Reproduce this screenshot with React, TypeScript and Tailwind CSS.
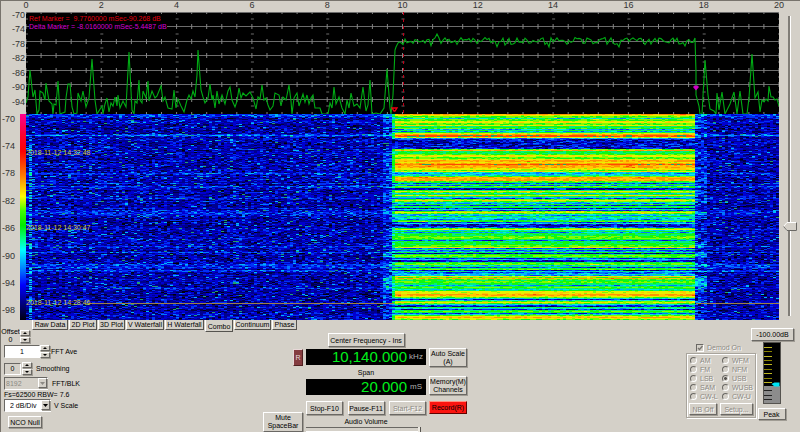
import React, { useMemo } from "react";

const RAISED =
  "border border-t-white border-l-white border-r-[#6a6864] border-b-[#6a6864] bg-[#d4d0c8] shadow-[1px_1px_0_#a09c94]";
const SUNKEN = "border border-t-[#6a6864] border-l-[#6a6864] border-r-white border-b-white";
const GREYED = "text-[#8c8983] [text-shadow:1px_1px_0_#fff]";

const X_TICKS = [0, 2, 4, 6, 8, 10, 12, 14, 16, 18, 20];
const SPECTRUM_LEVELS = [-70, -74, -78, -82, -86, -90, -94];
const WATERFALL_LEVELS = [-70, -74, -78, -82, -86, -90, -94, -98];

function createRandom(seed: number) {
  let s = seed;
  return () => {
    s = (s + 0x6d2b79f5) | 0;
    let t = Math.imul(s ^ (s >>> 15), 1 | s);
    t = (t + Math.imul(t ^ (t >>> 7), 61 | t)) ^ t;
    return ((t ^ (t >>> 14)) >>> 0) / 4294967296;
  };
}

/* ---------- spectrum ---------- */

const TRACE_BEFORE =
  "0,91 2,85 4,58 7,85 9,78 11,102 13,98 14,79 17,81 19,88 20,71 23,89 26,92 27,102 28,92 30,93 32,69 34,102 39,100 40,86 42,72 44,72 46,95 48,102 51,101 52,81 55,89 57,79 60,95 63,86 66,47 69,88 71,102 76,94 77,102 79,92 81,86 83,100 85,91 87,94 89,85 91,94 92,83 94,96 97,89 100,95 103,40 106,98 108,102 109,89 111,91 113,68 114,88 116,91 117,79 120,86 122,69 123,89 126,79 129,86 131,84 135,74 137,89 139,85 142,96 146,97 148,78 150,96 152,87 155,94 158,100 161,88 163,83 165,87 167,79 169,85 171,63 172,38 175,78 177,85 179,91 182,86 184,72 186,88 187,83 189,96 191,79 193,92 196,83 199,92 202,79 204,75 206,88 209,95 211,89 213,76 215,86 217,81 220,84 224,80 227,86 230,97 232,85 234,87 236,73 238,88 240,86 242,93 244,98 247,94 249,81 253,83 255,94 257,85 260,88 263,73 265,89 266,102 268,86 271,81 273,94 277,82 279,90 281,83 283,92 285,86 287,83 289,96 294,96 296,102 302,102 304,91 306,96 308,75 310,92 313,85 316,96 319,102 321,88 323,96 325,81 328,94 331,92 334,96 337,75 340,99 342,93 344,68 346,102 350,101 354,102 358,96 361,57 364,96 365,102 367,83 369,38 370,35 372,31";
const TRACE_AFTER =
  "669,26 670,60 670,83 673,94 674,102 676,102 679,48 682,83 684,97 688,99 690,102 691,81 693,98 696,80 699,102 704,92 708,80 711,102 714,79 717,102 721,102 723,86 726,42 729,86 732,80 734,100 736,88 738,90 740,87 742,89 743,74 745,85 747,85 749,88 751,87 753,94";

function buildTrace() {
  const rnd = createRandom(11);
  const pts: string[] = [];
  for (let x = 373; x < 669; x += 2) {
    let y = 29 + (rnd() - 0.5) * 7 + (rnd() > 0.95 ? 3 : 0);
    if (x < 390) y += 1;
    if (x === 409 || x === 413) y = 26;
    if (x === 411) y = 22;
    pts.push(`${x},${y.toFixed(1)}`);
  }
  return `${TRACE_BEFORE} ${pts.join(" ")} ${TRACE_AFTER}`;
}

function Spectrum() {
  const trace = useMemo(buildTrace, []);
  const rows = [14, 29, 43, 58, 72, 87];
  const minor = Array.from({ length: 51 }, (_, i) => i * 15.06);
  const major = Array.from({ length: 11 }, (_, i) => i * 75.3);
  const ticks = minor.map((x) => rows.map((y) => `M${x.toFixed(1)} ${y - 2}v5`).join("") + `M${x.toFixed(1)} 0v2M${x.toFixed(1)} 100v2`).join("");
  const dashes = major.map((x) => [7, 22, 36, 50, 65, 80, 94].map((y) => `M${(x - 1).toFixed(1)} ${y}h3`).join("")).join("");
  return (
    <svg className="block h-[102px] w-full bg-black" viewBox="0 0 753 102" preserveAspectRatio="none" role="img" aria-label="Spectrum">
      <path d={rows.map((y) => `M0 ${y}.5H753`).join("") + "M0 .5H753"} stroke="#6c6c6c" />
      <path d={ticks} stroke="#858585" />
      <path d={dashes} stroke="#6c6c6c" />
      <path d="M377.5 0V102" stroke="#c00018" strokeDasharray="3 4" />
      <polyline points={trace} fill="none" stroke="#00ac14" strokeWidth="1.1" />
      <path d="M366 96h5l-2 3h-1z" fill="none" stroke="#f00010" strokeWidth="1.3" />
      <path d="M667 75l1.500-1.500h3l1.500 1.500-3 3.500z" fill="#d000c8" />
    </svg>
  );
}

/* ---------- waterfall ---------- */

const PALETTE = [
  "#00000c", "#000048", "#000090", "#0000d0", "#0030f8", "#0078ff", "#00b8f8", "#00f0e0",
  "#00f080", "#10f810", "#80fc00", "#e8f000", "#ffc800", "#ff9400", "#ff4800", "#20a070",
];
const LEVEL: Record<string, number> = { n: 3, b: 4.3, a: 5.6, c: 6.9, g: 8.5, l: 9.6, y: 11.1, o: 12.6, r: 14 };

/* Signal strength of each sweep inside the burst, newest first, as run lengths. */
const BURST =
  "o1 y1 l2 c1 l2 y2 l2 y1 g2 l1 a1 g1 a1 g1 y1 o1 r1 r1 y1 a1 n10 l1 o1 g3 l1 y2 l2 y1 o2 y1 o1 r1 o3 y2 l1 y1 c1 a1 c2 l1 o4 l1 g1 b1 g1 a1 l1 g1 n2 g1 y1 l1 c1 g1 y1 g1 c1 b1 l1 y1 l1 c1 a1 g1 b1 g2 n1 c1 b1 l1 y1 l1 c1 a1 g1 c2 a1 g1 l1 b1 c1 n3 b1 l1 y1 c1 g1 a1 g3 l3 g1 b1 g4 l2 y1 b1 g1 b1 a1 g1 n1 g1 l2 g1 b1 c1 n2 g1 l2 c1 g1 b1 g1 l1 n1 c1 b1 a1 c1 a1 y1 l1 o1 l1 g1 l2 g2 a1 g1 l1 g1 c1 g1 y3 o2 y1 l1 c1 n1 c1 l1 y1 l1 c1 b1 n1 g1 c1 n1 g1 l1 g1 b1 c1 l1 y1 o1 y1 l1";

const BRIGHT: Record<number, number> = {
  0: 1.5, 1: 1.8, 2: 1.2, 3: 1, 7: 0.9, 8: 0.7, 20: 1.2, 21: 2.8, 22: 1, 39: 0.8, 59: 1.4, 60: 0.8, 69: 0.9, 72: 1.6,
  73: 0.6, 84: 0.8, 94: 1, 96: 1, 97: 0.8, 98: 1.1, 99: 1.2, 100: 0.9, 101: 0.8, 132: 1.5, 133: 0.6, 138: 1.5,
  150: 1.3, 151: 1.4, 152: 1.1, 153: 1.4, 154: 1.2, 156: 1.5, 157: 1, 173: 0.9, 174: 1.3,
};

const ROWS = 206;
const CELL = 3;
const COLS = 251;
const BURST_START = 368;
const BURST_END = 670;

function buildWaterfall() {
  const rnd = createRandom(2018);
  const sweeps: string[] = [];
  BURST.split(" ").forEach((run) => {
    for (let i = 0; i < Number(run.slice(1)); i++) sweeps.push(run[0]);
  });
  const paths = PALETTE.map(() => "");
  for (let y = 0; y < ROWS; y++) {
    const code = sweeps[y] ?? "l";
    const level = LEVEL[code];
    const strong = level > 6;
    const lift = BRIGHT[y] ?? 0;
    const drift = (rnd() - 0.5) * 0.7;
    const skirt = (y >= 162 && y < 174) || (y > 138 && y < 143);
    let runStart = 0;
    let runColor = -1;
    let held = 0;
    for (let c = 0; c <= COLS; c++) {
      const x = c * CELL;
      let color = -2;
      if (c < COLS) {
        if (x >= BURST_START - 2 && x < BURST_END - 1) {
          const spread = code === "n" ? 3.6 : code === "b" || code === "a" || code === "c" ? 2.8 : 1.5;
          held = held * 0.35 + (rnd() - 0.5) * spread;
          let v = level + held;
          if (x < BURST_START + 1 && strong) v = Math.min(v, 9.5) - rnd() * 2;
          color = Math.round(v);
        } else {
          let v = (rnd() + rnd()) * 2.45 + lift + drift;
          if (x === CELL && y > 22 && rnd() > 0.35) v += 3.2;
          const before = BURST_START - x;
          const after = x - BURST_END;
          const edge = skirt ? 1.5 + rnd() * 3.5 : strong ? rnd() * 2.6 : 0.3;
          if (before > 0 && before < 14) v += edge;
          if (after >= -1 && after < 9) v += edge;
          color = Math.round(Math.min(v, 9));
          if (rnd() > (x < BURST_START ? 0.972 : 0.982)) color = rnd() > 0.6 ? 15 : 6;
        }
        color = Math.max(0, Math.min(15, color));
      }
      if (color !== runColor) {
        if (runColor > 0) paths[runColor] += `M${runStart} ${y}H${x}v1H${runStart}z`;
        runStart = x;
        runColor = color;
      }
    }
  }
  return paths;
}

function Waterfall() {
  const paths = useMemo(buildWaterfall, []);
  return (
    <svg className="block h-[206px] w-full bg-[#00000c]" viewBox="0 0 753 206" preserveAspectRatio="none" shapeRendering="crispEdges" role="img" aria-label="Waterfall">
      {paths.map((d, i) => (d ? <path key={i} d={d} fill={PALETTE[i]} /> : null))}
      <path d="M62 189.500H368M670 189.500H753" stroke="#9c8048" />
    </svg>
  );
}

const STAMPS = [
  { time: "2018-11-12 14:32:48", place: "top-[35px]" },
  { time: "2018-11-12 14:30:47", place: "top-[110px]" },
  { time: "2018-11-12 14:28:46", place: "top-[185px]" },
];

/* ---------- controls ---------- */

function Button({ children, className = "", disabled = false }: { children: React.ReactNode; className?: string; disabled?: boolean }) {
  return (
    <button type="button" disabled={disabled} className={`flex items-center justify-center text-center whitespace-nowrap ${RAISED} ${disabled ? GREYED : ""} ${className}`}>
      {children}
    </button>
  );
}

function Spinner({ name }: { name: string }) {
  return (
    <span className="flex w-[10px] shrink-0 flex-col gap-px">
      <button type="button" aria-label={`${name} up`} className={`flex h-[6px] items-center justify-center ${RAISED}`}>
        <svg className="h-[2px] w-[4px]" viewBox="0 0 4 2"><path d="M0 2L2 0L4 2z" /></svg>
      </button>
      <button type="button" aria-label={`${name} down`} className={`flex h-[6px] items-center justify-center ${RAISED}`}>
        <svg className="h-[2px] w-[4px]" viewBox="0 0 4 2"><path d="M0 0L2 2L4 0z" /></svg>
      </button>
    </span>
  );
}

function Dropdown({ id, value, disabled = false, className = "" }: { id: string; value: string; disabled?: boolean; className?: string }) {
  return (
    <span className={`relative flex h-[13px] ${SUNKEN} ${className}`}>
      <select id={id} disabled={disabled} className={`w-full appearance-none leading-[11px] opacity-100 ${disabled ? "pl-px text-[#8c8983]" : "bg-white pl-[5px] text-black"}`}>
        <option>{value}</option>
      </select>
      <span className={`pointer-events-none absolute top-0 right-0 flex h-[10px] w-[9px] items-center justify-center ${RAISED}`}>
        <svg className="h-[3px] w-[5px]" viewBox="0 0 5 3"><path d="M0 0H5L2.500 3z" fill={disabled ? "#8c8983" : "#000"} /></svg>
      </span>
    </span>
  );
}

const TABS = [
  { name: "Raw Data", width: "w-[36px]" },
  { name: "2D Plot", width: "w-[28px]" },
  { name: "3D Plot", width: "w-[27px]" },
  { name: "V Waterfall", width: "w-[38px]" },
  { name: "H Waterfall", width: "w-[39px]" },
  { name: "Combo", width: "w-[28px]" },
  { name: "Continuum", width: "w-[37px]" },
  { name: "Phase", width: "w-[25px]" },
];

function Tabs() {
  return (
    <div role="tablist" className="ml-[31px] flex h-3 items-start gap-px">
      {TABS.map((tab) => {
        const active = tab.name === "Combo";
        return (
          <button
            key={tab.name}
            type="button"
            role="tab"
            aria-selected={active}
            className={`flex shrink-0 items-center justify-center border border-t-0 border-r-[#55534f] border-b-[#55534f] border-l-white whitespace-nowrap ${tab.width} ${active ? "h-3 pt-px" : "h-[10px]"}`}
          >
            {tab.name}
          </button>
        );
      })}
    </div>
  );
}

function FftPanel() {
  return (
    <section className="-mt-1 flex w-[262px] flex-col items-start pb-1 pl-[3px]">
      <div className="-ml-0.5 flex w-[28px] items-start justify-between">
        <span className="flex w-[17px] flex-col items-center leading-[8px]">
          <span>Offset</span>
          <span>0</span>
        </span>
        <span className="pt-0.5"><Spinner name="Offset" /></span>
      </div>
      <div className="mt-px flex items-center">
        <input id="ave" defaultValue="1" className={`h-[13px] w-[36px] bg-white text-center ${SUNKEN}`} />
        <Spinner name="FFT Ave" />
        <label htmlFor="ave" className="pl-px">FFT Ave</label>
      </div>
      <div className="mt-1 flex items-center">
        <input id="smooth" defaultValue="0" className={`h-[12px] w-[17px] text-center ${SUNKEN}`} />
        <span className="ml-px"><Spinner name="Smoothing" /></span>
        <label htmlFor="smooth" className="pl-1">Smoothing</label>
      </div>
      <div className="mt-0.5 flex items-center gap-1">
        <Dropdown id="blk" value="8192" disabled className="w-[44px]" />
        <label htmlFor="blk">FFT/BLK</label>
      </div>
      <p className="leading-[9px]">Fs=62500 RBW= 7.6</p>
      <div className="flex items-center gap-[3px]">
        <Dropdown id="vscale" value="2 dB/Div" className="w-[47px]" />
        <label htmlFor="vscale">V Scale</label>
      </div>
      <Button className="mt-1 ml-1 h-[12px] w-[34px]">NCO Null</Button>
    </section>
  );
}

function Readout({ value, unit }: { value: string; unit: string }) {
  return (
    <output className="flex h-4 items-center justify-end gap-px bg-black pr-0.5">
      <span className="text-[15px] leading-4 text-[#00f01c]">{value}</span>
      <span className="w-4 text-center text-[8px] text-[#b0b0b0]">{unit}</span>
    </output>
  );
}

function TuningPanel() {
  return (
    <section className="flex gap-[3px] pt-px">
      <div className="flex w-[40px] flex-col items-end justify-between pt-4">
        <button type="button" className="h-[17px] w-[10px] border border-t-[#e8d8d8] border-l-[#e8d8d8] border-r-[#502020] border-b-[#502020] bg-[#843c40] text-[#e8dcdc]">R</button>
        <Button className="h-5 w-full leading-[8px]">Mute<br />SpaceBar</Button>
      </div>
      <div className="flex w-[120px] flex-col">
        <Button className="h-[14px] w-[77px] self-center">Center Frequency - Ins</Button>
        <div className="mt-0.5"><Readout value="10,140.000" unit="kHz" /></div>
        <p className="flex h-[14px] items-center justify-center">Span</p>
        <Readout value="20.000" unit="mS" />
        <div className="mt-[6px] flex h-[14px] justify-between">
          <Button className="w-[37px]">Stop-F10</Button>
          <Button className="w-[37px]">Pause-F11</Button>
          <Button className="w-[37px]" disabled>Start-F12</Button>
        </div>
        <label htmlFor="volume" className="flex h-[12px] items-center justify-center">Audio Volume</label>
        <input
          id="volume"
          type="range"
          defaultValue="100"
          className="m-0 h-[5px] w-[115px] appearance-none border-t border-b border-t-[#6a6864] border-b-white bg-transparent [&::-webkit-slider-thumb]:h-[5px] [&::-webkit-slider-thumb]:w-[3px] [&::-webkit-slider-thumb]:appearance-none [&::-webkit-slider-thumb]:border-r [&::-webkit-slider-thumb]:border-[#55534f] [&::-webkit-slider-thumb]:bg-[#ece9e2]"
        />
      </div>
      <div className="flex w-[38px] flex-col pt-[15px]">
        <Button className="h-[19px] leading-[8px]">Auto Scale<br />(A)</Button>
        <Button className="mt-[9px] h-[19px] leading-[8px]">Memory(M)<br />Channels</Button>
        <button type="button" className="mt-[6px] h-[13px] border border-t-[#ff9080] border-l-[#ff9080] border-r-[#600000] border-b-[#600000] bg-[#fb1410]">Record(R)</button>
      </div>
    </section>
  );
}

const MODES = ["AM", "WFM", "FM", "NFM", "LSB", "USB", "SAM", "WUSB", "CW-L", "CW-U"];

function DemodPanel() {
  return (
    <section className={`mt-2 flex flex-col ${GREYED}`}>
      <label className="ml-[10px] flex h-[11px] items-center gap-[3px]">
        <span className={`relative flex h-2 w-2 ${SUNKEN}`}>
          <input type="checkbox" defaultChecked disabled className="absolute h-full w-full appearance-none" />
          <svg className="h-[6px] w-[6px]" viewBox="0 0 6 6"><path d="M1 3L2.500 4.500L5.500 1" fill="none" stroke="#77746f" strokeWidth="1.3" /></svg>
        </span>
        Demod On
      </label>
      <fieldset className="w-[70px] border border-[#a8a49c] pt-0.5 shadow-[1px_1px_0_#fff,inset_1px_1px_0_#fff]">
        <div className="grid grid-cols-[32px_1fr] pl-[3px]">
          {MODES.map((mode) => (
            <label key={mode} className="flex h-[9px] items-center gap-[3px] whitespace-nowrap">
              <input
                type="radio"
                name="mode"
                disabled
                defaultChecked={mode === "USB"}
                className="h-[7px] w-[7px] shrink-0 appearance-none rounded-full border border-t-[#6a6864] border-l-[#6a6864] border-r-white border-b-white checked:bg-[radial-gradient(#55534f_35%,transparent_45%)]"
              />
              {mode}
            </label>
          ))}
        </div>
        <div className="mt-0.5 flex justify-between px-0.5 pb-0.5">
          <Button disabled className="h-[12px] w-[28px]">NB Off</Button>
          <Button disabled className="h-[12px] w-[33px]">Setup...</Button>
        </div>
      </fieldset>
    </section>
  );
}

function LevelMeter() {
  return (
    <svg className="h-[62px] w-[18px] shrink-0" viewBox="0 0 18 62" role="img" aria-label="Signal level">
      <path d="M0 0H18V62H0z" fill="#55534f" />
      <path d="M1 1H17V44H1z" fill="#000" />
      <path d="M1 44H17V61H1z" fill="#8c8c8c" />
      <path d="M1 5.500h8M1 14.500h8M1 22.500h8M1 31.500h8M1 40.500h8" stroke="#c0b820" />
      <path d="M1 9.500h8M1 18.500h8M1 27.500h8M1 36.500h8" stroke="#8a8200" />
      <path d="M1 48.500h8M1 53.500h8M1 57.500h8" stroke="#222" />
      <path d="M8.500 42l3-1.500h5v4h-5z" fill="#00e4f4" />
    </svg>
  );
}

export default function App() {
  return (
    <main className="min-h-screen overflow-hidden border-t border-l border-[#77736c] bg-[#d4d0c8] font-['Liberation_Sans',Arial,sans-serif] text-[7px] leading-none text-black">
      <div className="flex">
        <div className="w-[25px] shrink-0">
          <div className="h-[113px] pt-[14px] pb-3 pr-px text-right text-[9px] text-[#333]">
            <div className="flex h-full flex-col justify-between">
              {SPECTRUM_LEVELS.map((v) => (
                <span key={v} className="flex h-0 items-center justify-end">{v}</span>
              ))}
            </div>
          </div>
          <div className="flex h-[206px] justify-between">
            <div className="flex flex-col justify-between py-[5px] pb-[9px] pl-px text-[9px] text-[#333]">
              {WATERFALL_LEVELS.map((v) => (
                <span key={v} className="flex h-0 items-center">{v}</span>
              ))}
            </div>
            <div className="w-[6px] bg-linear-[to_bottom,#ff0090_0%,#ff0030_10%,#ff0000_18%,#ff7000_29%,#ffff00_40%,#40ff00_47%,#00e800_54%,#00ff90_61%,#00ffff_66%,#0080ff_75%,#0000ff_83%,#000080_92%,#000010_100%]" />
          </div>
        </div>
        <div className="min-w-0 flex-1">
          <div className="flex h-[11px] items-start justify-between text-[9px] leading-[9px] text-[#333]">
            {X_TICKS.map((t) => (
              <span key={t} className="flex w-0 justify-center">{t}</span>
            ))}
          </div>
          <div className="relative">
            <Spectrum />
            <p className="absolute top-[3px] left-[3px] bg-black text-[7px] leading-[8px] whitespace-pre text-[#e00010]">Ref Marker =  9.7760000 mSec-90.268 dB</p>
            <p className="absolute top-[11px] left-[3px] bg-black text-[7px] leading-[8px] whitespace-pre text-[#d400d4]">Delta Marker = -8.0160000 mSec-5.4487 dB</p>
          </div>
          <div className="relative">
            <Waterfall />
            {STAMPS.map((s) => (
              <time key={s.time} className={`absolute left-0 text-[7px] leading-[8px] text-[#d4cc3c] ${s.place}`}>{s.time}</time>
            ))}
          </div>
        </div>
        <label className="relative flex w-[21px] shrink-0 justify-center pt-[15px] pb-1">
          <span className="w-[3px] border-r border-l-2 border-l-[#807d77] border-r-white" />
          <input type="range" aria-label="Vertical position" defaultValue="30" className="absolute inset-0 h-full w-full opacity-0" />
          <svg className="absolute top-[221px] left-[4px] h-[9px] w-[14px]" viewBox="0 0 14 9">
            <path d="M.5 4.500L4 .5H13.500V8.500H4z" fill="#d4d0c8" stroke="#fff" />
            <path d="M.5 4.500L4 8.500H13.500V.5" fill="none" stroke="#6a6864" />
          </svg>
        </label>
      </div>

      <Tabs />

      <div className="flex items-start">
        <FftPanel />
        <TuningPanel />
        <div className="ml-auto flex items-start pr-[6px]">
          <div className="pt-0.5"><DemodPanel /></div>
          <div className="-mt-1 -ml-[5px] flex flex-col items-center">
            <Button className="h-[13px] w-[43px]">-100.00dB</Button>
            <div className="mt-px mr-0.5"><LevelMeter /></div>
            <Button className="mt-1 mr-0.5 h-[12px] w-[28px]">Peak</Button>
          </div>
        </div>
      </div>
    </main>
  );
}
